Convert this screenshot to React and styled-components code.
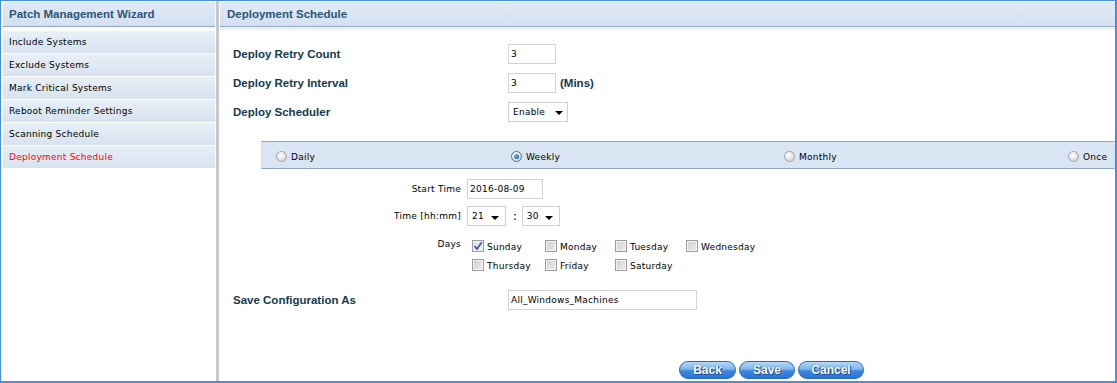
import React from "react";
import styled, { createGlobalStyle } from "styled-components";

const GlobalStyle = createGlobalStyle`
  html, body { margin: 0; padding: 0; background: #fff; }
  body { font-family: "DejaVu Sans", Verdana, sans-serif; }
`;

const navItems = [
  "Include Systems",
  "Exclude Systems",
  "Mark Critical Systems",
  "Reboot Reminder Settings",
  "Scanning Schedule",
  "Deployment Schedule",
];

const days = [
  ["Sunday", true],
  ["Monday", false],
  ["Tuesday", false],
  ["Wednesday", false],
  ["Thursday", false],
  ["Friday", false],
  ["Saturday", false],
];

function App() {
  return (
    <>
      <GlobalStyle />
      <Frame>
        <Sidebar>
          <PanelHeader $indent={6}>Patch Management Wizard</PanelHeader>
          <NavList>
            {navItems.map((item) => (
              <NavItem key={item} $active={item === "Deployment Schedule"}>
                {item}
              </NavItem>
            ))}
          </NavList>
        </Sidebar>
        <Divider />
        <Main>
          <PanelHeader $indent={7}>Deployment Schedule</PanelHeader>
          <Strip />

          <FormGrid>
            <Label>Deploy Retry Count</Label>
            <Field>
              <TextBox $width={48} value="3" readOnly />
            </Field>
            <Label>Deploy Retry Interval</Label>
            <Field>
              <TextBox $width={48} value="3" readOnly />
              <Unit>(Mins)</Unit>
            </Field>
            <Label>Deploy Scheduler</Label>
            <Field>
              <Select $width={60}>
                Enable
                <Arrow />
              </Select>
            </Field>
          </FormGrid>

          <Band>
            <RadioOption>
              <Radio />
              Daily
            </RadioOption>
            <RadioOption>
              <Radio $checked />
              Weekly
            </RadioOption>
            <RadioOption>
              <Radio />
              Monthly
            </RadioOption>
            <RadioOption>
              <Radio />
              Once
            </RadioOption>
          </Band>

          <SubForm>
            <SmallLabel>Start Time</SmallLabel>
            <Field>
              <TextBox $width={76} value="2016-08-09" readOnly />
            </Field>
            <SmallLabel>Time [hh:mm]</SmallLabel>
            <Field>
              <Select $width={39} $small>
                21
                <Arrow />
              </Select>
              <Colon>:</Colon>
              <Select $width={38} $small>
                30
                <Arrow />
              </Select>
            </Field>
            <SmallLabel $top>Days</SmallLabel>
            <DaysGrid>
              {days.map(([day, checked]) => (
                <DayOption key={day}>
                  <CheckBox $checked={checked}>
                    {checked && (
                      <svg width="10" height="10" viewBox="0 0 10 10">
                        <path d="M1.5 5 L4 8 L8.8 1.2" fill="none" stroke="#3c5fae" strokeWidth="1.8" />
                      </svg>
                    )}
                  </CheckBox>
                  <DayText>{day}</DayText>
                </DayOption>
              ))}
            </DaysGrid>
          </SubForm>

          <SaveRow>
            <Label>Save Configuration As</Label>
            <Field>
              <TextBox $width={189} value="All_Windows_Machines" readOnly />
            </Field>
          </SaveRow>

          <Buttons>
            <Button $width={57}>Back</Button>
            <Button $width={56}>Save</Button>
            <Button $width={66}>Cancel</Button>
          </Buttons>
        </Main>
      </Frame>
    </>
  );
}

// Styled Components

const Frame = styled.div`
  width: 1117px;
  height: 383px;
  box-sizing: border-box;
  border-style: solid;
  border-color: #4a8fd8;
  border-width: 1px 2px 2px 1px;
  display: flex;
  background: #fff;
  overflow: hidden;
`;

const Sidebar = styled.aside`
  width: 215px;
  flex-shrink: 0;
  box-sizing: border-box;
  padding: 1px 1px 0 2px;
`;

const PanelHeader = styled.div`
  height: 24px;
  border-bottom: 1px solid #8fa9c9;
  background: linear-gradient(#e1eaf6, #d4e0f1);
  display: flex;
  align-items: center;
  padding-left: ${(p) => p.$indent}px;
  font: bold 11.5px "Liberation Sans", Arial, sans-serif;
  color: #2b5675;
`;

const NavList = styled.ul`
  list-style: none;
  margin: 4px 0 0;
  padding: 0;
`;

const NavItem = styled.li`
  height: 22px;
  margin-bottom: 1px;
  display: flex;
  align-items: center;
  padding-left: 6px;
  background: linear-gradient(#e8eff7, #d7e3ef);
  font-size: 9px;
  letter-spacing: 0.25px;
  color: ${(p) => (p.$active ? "#ff0000" : "#000")};
`;

const Divider = styled.div`
  width: 3px;
  flex-shrink: 0;
  background: #c8c8c8;
`;

const Main = styled.main`
  flex: 1;
  margin-left: 1px;
  padding-top: 1px;
  display: flex;
  flex-direction: column;
`;

const Strip = styled.div`
  height: 3px;
  background: #eef1e9;
`;

const FormGrid = styled.div`
  display: grid;
  grid-template-columns: 275px auto;
  grid-auto-rows: 29px;
  align-items: center;
  padding: 9px 0 0 13px;
`;

const Label = styled.div`
  font: bold 11.5px "Liberation Sans", Arial, sans-serif;
  color: #143a4f;
`;

const Field = styled.div`
  display: flex;
  align-items: center;
`;

const TextBox = styled.input`
  width: ${(p) => p.$width}px;
  height: 20px;
  box-sizing: border-box;
  border: 1px solid #d4d4d4;
  padding: 0 2px;
  margin: 0;
  font: 9px "DejaVu Sans", Verdana, sans-serif;
  letter-spacing: 0.25px;
  color: #000;
  background: #fff;
  outline: none;
`;

const Unit = styled.span`
  margin-left: 4px;
  font: bold 11.5px "Liberation Sans", Arial, sans-serif;
  color: #143a4f;
`;

const Select = styled.div`
  width: ${(p) => p.$width}px;
  height: 20px;
  box-sizing: border-box;
  border: 1px solid #d0d0d0;
  background: #fff;
  display: flex;
  align-items: center;
  justify-content: space-between;
  padding: 0 ${(p) => (p.$small ? 6 : 4)}px 0 4px;
  font-size: 9px;
  letter-spacing: 0.25px;
  color: #000;
`;

const Arrow = styled.span`
  width: 0;
  height: 0;
  margin-top: 3px;
  border-left: 4px solid transparent;
  border-right: 4px solid transparent;
  border-top: 4px solid #000;
`;

const Band = styled.div`
  margin: 15px 0 0 41px;
  height: 28px;
  border-top: 1px solid #8fa9c9;
  border-bottom: 1px solid #8fa9c9;
  background: #dae5f3;
  display: grid;
  grid-template-columns: 235px 273px 284px auto;
  align-items: center;
  padding: 3px 0 0 15px;
  box-sizing: border-box;
`;

const RadioOption = styled.label`
  display: inline-flex;
  align-items: center;
  gap: 4px;
  font-size: 9px;
  letter-spacing: 0.25px;
  color: #000;
`;

const Radio = styled.span`
  width: 11px;
  height: 11px;
  box-sizing: border-box;
  border-radius: 50%;
  border: 1px solid ${(p) => (p.$checked ? "#5a6d80" : "#a3a3a3")};
  background: radial-gradient(circle at 40% 35%, #ffffff 0%, #e3e3e3 55%, #c4c4c4 100%);
  display: flex;
  align-items: center;
  justify-content: center;

  &::after {
    content: "";
    display: ${(p) => (p.$checked ? "block" : "none")};
    width: 5px;
    height: 5px;
    border-radius: 50%;
    background: radial-gradient(circle at 35% 35%, #6fb6f4, #0a4f9e);
  }
`;

const SubForm = styled.div`
  display: grid;
  grid-template-columns: 241px auto;
  column-gap: 6px;
  row-gap: 7px;
  margin-top: 10px;
`;

const SmallLabel = styled.div`
  text-align: right;
  align-self: ${(p) => (p.$top ? "start" : "center")};
  margin-top: ${(p) => (p.$top ? 6 : 0)}px;
  font-size: 9px;
  letter-spacing: 0.25px;
  color: #000;
`;

const Colon = styled.span`
  margin: 0 5px 0 7px;
  font: bold 11.5px "Liberation Sans", Arial, sans-serif;
  color: #143a4f;
`;

const DaysGrid = styled.div`
  display: grid;
  grid-template-columns: 73px 70px 71px auto;
  grid-auto-rows: 13px;
  row-gap: 6px;
  margin: 6px 0 0 5px;
`;

const DayOption = styled.label`
  display: flex;
  align-items: center;
  gap: 3px;
`;

const CheckBox = styled.span`
  width: 12px;
  height: 12px;
  box-sizing: border-box;
  border: 1px solid #9c9c9c;
  box-shadow: inset 0 0 0 1px #f4f4f4;
  background: ${(p) =>
    p.$checked
      ? "linear-gradient(135deg, #d8dde6, #f4f6fa)"
      : "linear-gradient(135deg, #cfcfcf, #ececec)"};
  display: flex;
  align-items: center;
  justify-content: center;
`;

const DayText = styled.span`
  padding-top: 3px;
  font-size: 9px;
  letter-spacing: 0.25px;
  color: #000;
`;

const SaveRow = styled.div`
  display: grid;
  grid-template-columns: 275px auto;
  align-items: center;
  height: 20px;
  margin-top: 19px;
  padding-left: 13px;
`;

const Buttons = styled.div`
  display: flex;
  gap: 3px;
  margin-top: 51px;
  padding-left: 459px;
`;

const Button = styled.button`
  width: ${(p) => p.$width}px;
  height: 18px;
  box-sizing: border-box;
  padding: 0;
  border: 1px solid #2c69bb;
  border-radius: 9px;
  background: linear-gradient(#b4d8f8 0%, #7db6ee 45%, #3f88e0 55%, #2a74d4 100%);
  font: bold 12px "Liberation Sans", Arial, sans-serif;
  color: #fff;
  text-shadow: 0 0 1px #123f85, 1px 1px 0 #1e4f96;
  cursor: pointer;
`;

export default App;
